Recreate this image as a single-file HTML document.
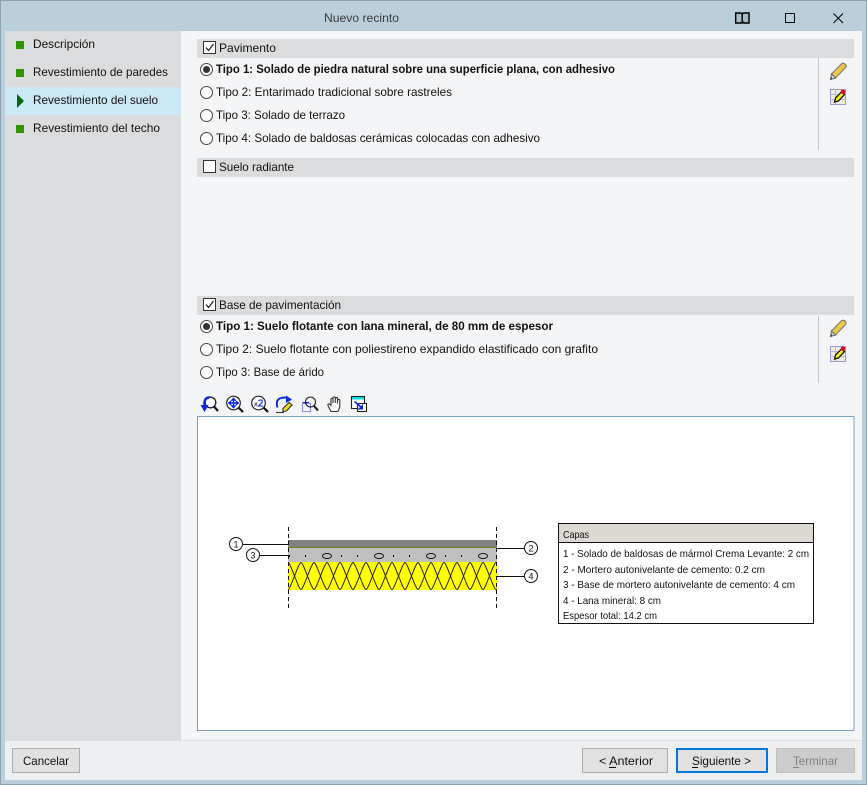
<!DOCTYPE html>
<html lang="es"><head><meta charset="utf-8"><title>Nuevo recinto</title>
<style>
html,body{margin:0;padding:0;width:867px;height:785px;overflow:hidden;background:#b9cfdc}
svg{display:block}
text{font-family:"Liberation Sans",sans-serif;font-size:12px;fill:#111}
.s{font-size:10.5px}
.c{font-size:9px;text-anchor:middle}
</style></head><body>
<svg width="867" height="785" viewBox="0 0 867 785" xmlns="http://www.w3.org/2000/svg">
<defs>
<pattern id="wool" x="288" y="562" width="26" height="28" patternUnits="userSpaceOnUse">
<path d="M0 .5C2.500 .5 10.500 27.500 13 27.500S23.500 .5 26 .5M0 27.500C2.500 27.500 10.500 .5 13 .5S23.500 27.500 26 27.500" fill="none" stroke="#222" stroke-width="1"/>
</pattern>
<g id="pencil"><path d="M1.500 12 L11.500 1.800 Q13 .5 15 2 Q17 3.800 15.500 5.500 L5.500 16 Z" fill="#eec846" stroke="#777" stroke-width="1.100"/><path d="M1.500 12 L5.500 16 L.5 17.500 Z" fill="#e8e8e8" stroke="#666"/><path d="M.5 17.500L2 15.500" stroke="#333"/></g>
<g id="tbl"><rect x=".5" y=".5" width="15" height="15" fill="#f0ece0" stroke="#9d99d4"/><path d="M.5 5.500H15.500M.5 10.500H15.500M5.500 .5V15.500" stroke="#b9b6de" fill="none"/><path d="M5.500 9 L11.500 3 L14.500 5.500 L8.500 12 L4.500 13 Z" fill="#f5ee1e" stroke="#000" stroke-width="1.200"/><circle cx="13" cy="2.800" r="2.300" fill="#d80a1e"/></g>
</defs>

<rect width="867" height="785" fill="#b9cfdc"/>
<rect width="867" height="1" fill="#8aa3b3"/>
<rect y="0" width="1" height="785" fill="#8aa3b3"/>
<rect x="866" y="0" width="1" height="785" fill="#8aa3b3"/>
<rect y="784" width="867" height="1" fill="#8aa3b3"/>
<text x="324" y="22" textLength="75" lengthAdjust="spacingAndGlyphs" style="fill:#3a3a3a">Nuevo recinto</text>

<!-- window buttons -->
<rect x="735" y="12" width="15" height="12" fill="#a6bcc9"/>
<path d="M735.700 13 H740 Q742.200 13 742.200 15 V23 H735.700 Z M742.200 15 Q742.200 13 744.500 13 H749 V23 H744 L743 22 H742.200" fill="none" stroke="#000" stroke-width="1.400"/>
<rect x="785.500" y="13.500" width="9" height="9" fill="none" stroke="#000"/>
<path d="M833.500 13.500 L843 23 M843 13.500 L833.500 23" stroke="#000" fill="none"/>

<!-- body panels -->
<rect x="5" y="31" width="857" height="749" fill="#f4f5f7"/>
<rect x="5" y="31" width="176" height="709" fill="#dbdcde"/>
<rect x="5" y="87" width="176" height="28" fill="#cbe8f6"/>
<rect x="5" y="740" width="857" height="40" fill="#eeeff1"/>
<rect x="5" y="740" width="857" height="1" fill="#dfe0e2"/>

<!-- sidebar -->
<rect x="16" y="41" width="8" height="8" fill="#2f9500"/>
<rect x="16" y="69" width="8" height="8" fill="#2f9500"/>
<path d="M17 94 L24 101 L17 108 Z" fill="#006a0a"/>
<rect x="16" y="125" width="8" height="8" fill="#2f9500"/>
<text x="33" y="48" textLength="62" lengthAdjust="spacingAndGlyphs">Descripción</text>
<text x="33" y="76" textLength="135" lengthAdjust="spacingAndGlyphs">Revestimiento de paredes</text>
<text x="33" y="104" textLength="125" lengthAdjust="spacingAndGlyphs">Revestimiento del suelo</text>
<text x="33" y="132" textLength="127" lengthAdjust="spacingAndGlyphs">Revestimiento del techo</text>

<!-- section headers -->
<rect x="197" y="39" width="657" height="19" fill="#dadcde"/>
<rect x="197" y="158" width="657" height="19" fill="#dadcde"/>
<rect x="197" y="296" width="657" height="19" fill="#dadcde"/>

<g fill="#fff" stroke="#333">
<rect x="203.500" y="41.500" width="12" height="12"/>
<rect x="203.500" y="160.500" width="12" height="12"/>
<rect x="203.500" y="298.500" width="12" height="12"/>
</g>
<g fill="none" stroke="#222" stroke-width="1.200">
<path d="M206 47.500 L208.500 50.500 L213.500 44"/>
<path d="M206 304.500 L208.500 307.500 L213.500 301"/>
</g>
<text x="219" y="52" textLength="57" lengthAdjust="spacingAndGlyphs">Pavimento</text>
<text x="219" y="171" textLength="75" lengthAdjust="spacingAndGlyphs">Suelo radiante</text>
<text x="219" y="309" textLength="122" lengthAdjust="spacingAndGlyphs">Base de pavimentación</text>

<!-- radios -->
<g fill="#fff" stroke="#444">
<circle cx="206.500" cy="69.500" r="6"/>
<circle cx="206.500" cy="92.500" r="6"/>
<circle cx="206.500" cy="115.500" r="6"/>
<circle cx="206.500" cy="138.500" r="6"/>
<circle cx="206.500" cy="326.500" r="6"/>
<circle cx="206.500" cy="349.500" r="6"/>
<circle cx="206.500" cy="372.500" r="6"/>
</g>
<circle cx="206.500" cy="69.500" r="3.500" fill="#333"/>
<circle cx="206.500" cy="326.500" r="3.500" fill="#333"/>

<text x="216" y="73" textLength="399" lengthAdjust="spacingAndGlyphs" font-weight="bold">Tipo 1: Solado de piedra natural sobre una superficie plana, con adhesivo</text>
<text x="216" y="96" textLength="236" lengthAdjust="spacingAndGlyphs">Tipo 2: Entarimado tradicional sobre rastreles</text>
<text x="216" y="119" textLength="129" lengthAdjust="spacingAndGlyphs">Tipo 3: Solado de terrazo</text>
<text x="216" y="142" textLength="324" lengthAdjust="spacingAndGlyphs">Tipo 4: Solado de baldosas cerámicas colocadas con adhesivo</text>
<text x="216" y="330" textLength="337" lengthAdjust="spacingAndGlyphs" font-weight="bold">Tipo 1: Suelo flotante con lana mineral, de 80 mm de espesor</text>
<text x="216" y="353" textLength="382" lengthAdjust="spacingAndGlyphs">Tipo 2: Suelo flotante con poliestireno expandido elastificado con grafito</text>
<text x="216" y="376" textLength="108" lengthAdjust="spacingAndGlyphs">Tipo 3: Base de árido</text>

<!-- dividers and side icons -->
<rect x="818" y="58" width="1" height="92" fill="#c4c5c7"/>
<rect x="818" y="316" width="1" height="67" fill="#c4c5c7"/>
<use href="#pencil" x="830" y="62"/>
<use href="#tbl" x="830" y="89"/>
<use href="#pencil" x="830" y="319"/>
<use href="#tbl" x="830" y="346"/>

<!-- toolbar -->
<g fill="none" stroke-width="1.100">
<g transform="translate(201,396)"><circle cx="9.500" cy="6.500" r="5.300" stroke="#222" stroke-width="1.300" fill="#fff"/><path d="M13 10.500L17 15" stroke="#111" stroke-width="2.200"/><path d="M8.500 1.500 Q2.500 1.500 3.500 10" stroke="#0a2be0" stroke-width="2.400"/><path d="M-.5 9 H7.500 L3.500 16 Z" fill="#0a2be0" stroke="none"/></g>
<g transform="translate(226,396)"><circle cx="7.500" cy="7" r="6.800" stroke="#222" stroke-width="1.200" fill="#fff"/><path d="M12.500 11.500L17 16" stroke="#111" stroke-width="2.200"/><path d="M7.500 1.500L5 4.500H10ZM7.500 12.500L5 9.500H10ZM2 7L5 4.500V9.500ZM13 7L10 4.500V9.500Z" fill="#0a2be0" stroke="#0a2be0" stroke-width=".5"/><path d="M7.500 4V10M4.500 7H10.500" stroke="#0a2be0" stroke-width="1.400"/></g>
<g transform="translate(251,396)"><circle cx="7.500" cy="7" r="6.800" stroke="#222" stroke-width="1.200" fill="#fff"/><path d="M12.500 11.500L17 16" stroke="#111" stroke-width="2.200"/><path d="M3.500 6.500L6.300 10M6.300 6.500L3.500 10" stroke="#335" stroke-width=".8"/><path d="M7.500 5Q9 3.300 11 4.300Q12 6 10 7.500L7.500 10H12" stroke="#0a2be0"/></g>
<g transform="translate(276,396)"><path d="M1.500 11.500 Q-1 3 6 1.800 Q9.500 1 12 2.500" stroke="#0a2be0" stroke-width="2"/><path d="M10 -.5 L16 3.500 L10 7 Z" fill="#0a2be0" stroke="none"/><path d="M7 12.500 L13 6.500 L16 9 L10.500 15 L7 15.500 Z" fill="#f5dd1e" stroke="#333"/><path d="M0 16.500H8" stroke="#333"/></g>
<g transform="translate(301,396)"><rect x="1.500" y="7.500" width="8" height="8" stroke="#2a2ad0" stroke-dasharray="1 1"/><path d="M1.500 6.500H8" stroke="#2a2ad0" /><circle cx="9.500" cy="6" r="5" stroke="#222" stroke-width="1.100"/><path d="M13 10L17 14.500" stroke="#111" stroke-width="2"/></g>
<g transform="translate(327,396)"><path d="M4 15.500 L1 9.500 Q.5 7.500 2.500 8 L4 9.500 V3 Q5 1.500 6 3 V7 V1.500 Q7.200 .3 8.300 1.500 V7 V2 Q9.500 1 10.500 2 V7.500 V4 Q11.700 3 12.800 4 V11 L11 15.500 Z" fill="#fff" stroke="#333"/></g>
<g transform="translate(351,396)"><rect x=".5" y=".5" width="13" height="12" fill="#fff" stroke="#222"/><rect x="1" y="1" width="12" height="2.500" fill="#10d8e0"/><rect x="6.500" y="7.500" width="9" height="8" fill="#fff" stroke="#222"/><path d="M3.500 5.500L10.500 11.500" stroke="#0a2be0" stroke-width="1.600"/><path d="M12 8V13.500H6.500Z" fill="#0a2be0"/></g>
</g>

<!-- drawing panel -->
<rect x="197.500" y="416.500" width="656.500" height="314" fill="#fff" stroke="#7b9ebd"/>

<!-- section -->
<rect x="288" y="540" width="209" height="7" fill="#808080"/>
<rect x="288" y="547" width="209" height="1" fill="#7a7a20"/>
<rect x="288" y="548" width="209" height="14" fill="#c0c0c0"/>
<rect x="288" y="562" width="209" height="28" fill="#ffff00"/>
<rect x="288" y="562" width="209" height="28" fill="url(#wool)"/>
<g fill="none" stroke="#111">
<ellipse cx="327" cy="556" rx="4.500" ry="2.500"/>
<ellipse cx="379" cy="556" rx="4.500" ry="2.500"/>
<ellipse cx="431" cy="556" rx="4.500" ry="2.500"/>
<ellipse cx="483" cy="556" rx="4.500" ry="2.500"/>
<path d="M305.500 555v2M341.500 555v2M357.500 555v2M393.500 555v2M409.500 555v2M445.500 555v2M461.500 555v2M289.500 555v2"/>
<path d="M288.500 527V608M496.500 527V608" stroke-dasharray="4 3"/>
<path d="M243 544.500H288M260 555.500H288M497 548.500H524M497 576.500H524"/>
<circle cx="236" cy="544" r="6.500" fill="#fff"/>
<circle cx="253" cy="555" r="6.500" fill="#fff"/>
<circle cx="531" cy="548" r="6.500" fill="#fff"/>
<circle cx="531" cy="576" r="6.500" fill="#fff"/>
</g>
<text class="c" x="236" y="547.500">1</text>
<text class="c" x="253" y="558.500">3</text>
<text class="c" x="531" y="551.500">2</text>
<text class="c" x="531" y="579.500">4</text>

<!-- legend -->
<rect x="558.500" y="523.500" width="255" height="100" fill="#fff" stroke="#111"/>
<rect x="559" y="524" width="254" height="18" fill="#dcd8d2"/>
<rect x="559" y="542" width="254" height="1" fill="#111"/>
<text class="s" x="563" y="538" textLength="26" lengthAdjust="spacingAndGlyphs">Capas</text>
<text class="s" x="563" y="557" textLength="246" lengthAdjust="spacingAndGlyphs">1 - Solado de baldosas de mármol Crema Levante: 2 cm</text>
<text class="s" x="563" y="573" textLength="202" lengthAdjust="spacingAndGlyphs">2 - Mortero autonivelante de cemento: 0.2 cm</text>
<text class="s" x="563" y="588" textLength="232" lengthAdjust="spacingAndGlyphs">3 - Base de mortero autonivelante de cemento: 4 cm</text>
<text class="s" x="563" y="604" textLength="98" lengthAdjust="spacingAndGlyphs">4 - Lana mineral: 8 cm</text>
<text class="s" x="563" y="619" textLength="94" lengthAdjust="spacingAndGlyphs">Espesor total: 14.2 cm</text>

<!-- buttons -->
<rect x="12.500" y="748.500" width="67" height="24" fill="#e1e1e1" stroke="#adadad"/>
<text x="23" y="765" textLength="46" lengthAdjust="spacingAndGlyphs">Cancelar</text>
<rect x="582.500" y="748.500" width="85" height="24" fill="#e1e1e1" stroke="#adadad"/>
<text x="599" y="765" textLength="54" lengthAdjust="spacingAndGlyphs">&lt; Anterior</text>
<rect x="609" y="767" width="7" height="1" fill="#111"/>
<rect x="677" y="749" width="90" height="23" fill="#e1e1e1" stroke="#0078d7" stroke-width="2"/>
<text x="692" y="765" textLength="59" lengthAdjust="spacingAndGlyphs">Siguiente &gt;</text>
<rect x="692" y="767" width="6" height="1" fill="#111"/>
<rect x="776.500" y="748.500" width="78" height="24" fill="#cccccc" stroke="#bfbfbf"/>
<text x="793" y="765" textLength="45" lengthAdjust="spacingAndGlyphs" style="fill:#808080">Terminar</text>
<rect x="793" y="767" width="6" height="1" fill="#808080"/>
</svg>
</body></html>
